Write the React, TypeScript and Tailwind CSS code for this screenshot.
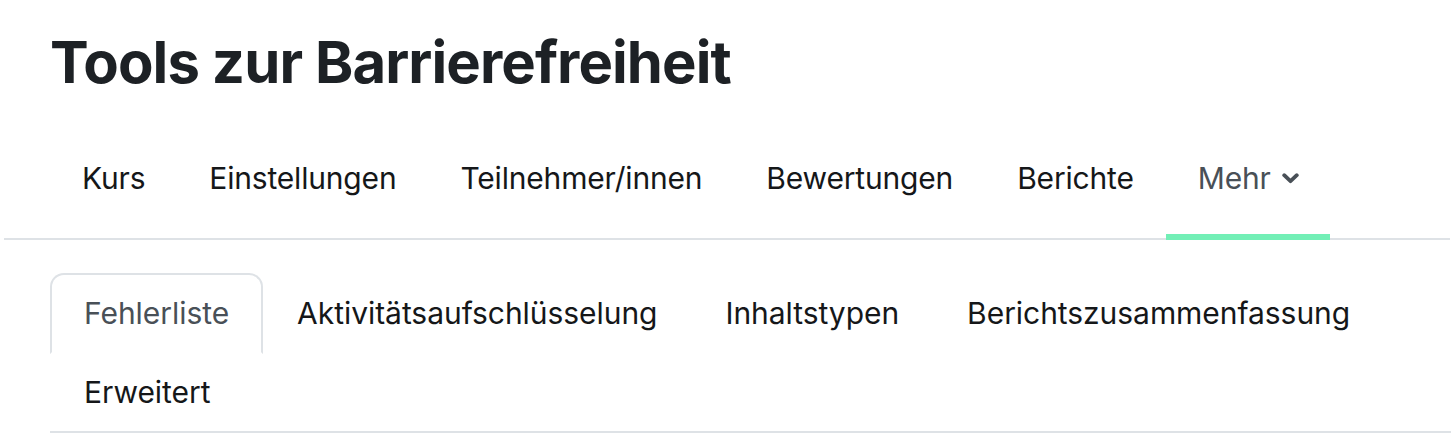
const primaryNav = ["Kurs", "Einstellungen", "Teilnehmer/innen", "Bewertungen", "Berichte"];
const reportTabs = [
  "Fehlerliste",
  "Aktivitätsaufschlüsselung",
  "Inhaltstypen",
  "Berichtszusammenfassung",
  "Erweitert",
];

function ChevronDown() {
  return (
    <svg width="17" height="11" viewBox="0 0 17 11" aria-hidden className="ml-[11px] mt-[1px]">
      <polyline
        points="2.2,2.2 8.5,8.2 14.8,2.2"
        fill="none"
        stroke="currentColor"
        strokeWidth="3.8"
        strokeLinecap="round"
        strokeLinejoin="round"
      />
    </svg>
  );
}

export default function App() {
  return (
    <div
      className="w-[1451px] h-[433px] overflow-hidden bg-white text-[#1d2125]"
      style={{ fontFamily: "Inter, 'Noto Sans', sans-serif" }}
    >
      {/* Page heading */}
      <h1 className="pl-[50px] pt-[26px] text-[58px] font-bold leading-[72px] tracking-[-0.9px]">
        Tools zur Barrierefreiheit
      </h1>

      {/* Secondary (course) navigation */}
      <nav className="ml-[4px] mr-[1px] mt-[20px] border-b-2 border-[#dee2e6]">
        <ul className="flex pl-[46px] tracking-[-0.18px]">
          {primaryNav.map((item) => (
            <li key={item} className="flex h-[120px] items-center px-[32px] text-[30px] leading-[45px] text-[#151719]">
              {item}
            </li>
          ))}
          <li className="relative flex h-[120px] items-center pl-[32px] pr-[31px] text-[30px] leading-[45px] text-[#495057]">
            Mehr
            <ChevronDown />
            <span className="absolute bottom-[-2px] left-0 right-0 h-[6px] bg-[#72efb6]" />
          </li>
        </ul>
      </nav>

      {/* Report tabs */}
      <ul className="ml-[50px] mt-[33px] flex w-[1401px] flex-wrap border-b-2 border-[#dee2e6] tracking-[-0.05px]">
        {reportTabs.map((tab, i) => (
          <li key={tab} className="-mb-[2px]">
            <span
              className={`block rounded-t-[14px] border-2 px-[32px] py-[16px] text-[30px] leading-[45px] ${
                i === 0
                  ? "border-[#dee2e6] border-b-white bg-white text-[#495057]"
                  : "border-transparent text-[#151719]"
              }`}
            >
              {tab}
            </span>
          </li>
        ))}
      </ul>
    </div>
  );
}
